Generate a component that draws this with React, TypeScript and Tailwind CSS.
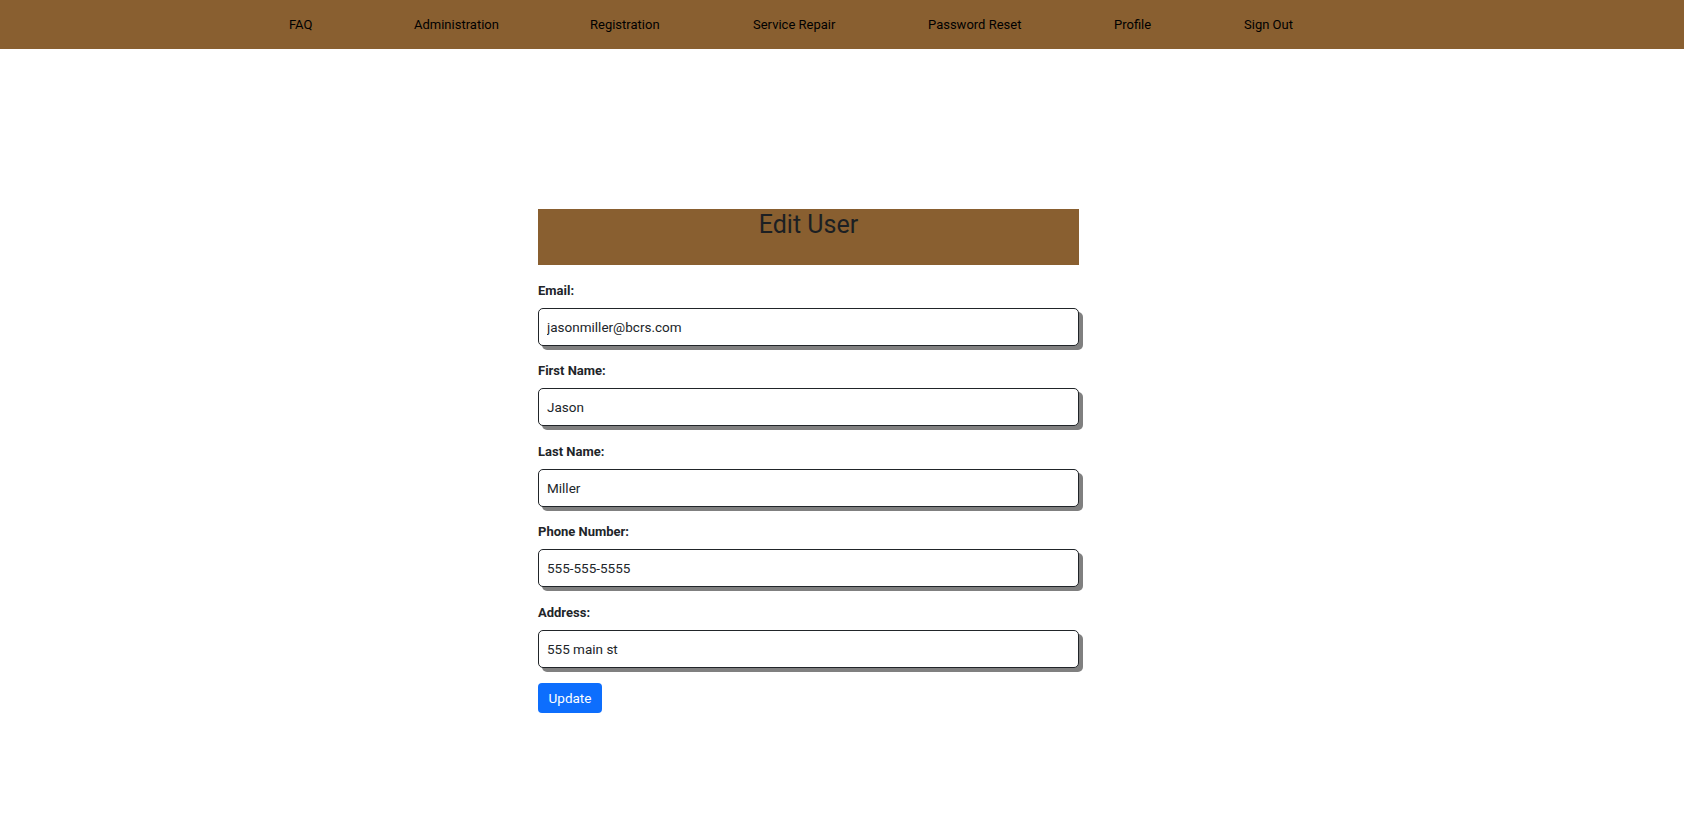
import { useState } from "react";

const navLinks = [
  { label: "FAQ", w: "w-[125px]" },
  { label: "Administration", w: "w-[176px]" },
  { label: "Registration", w: "w-[163px]" },
  { label: "Service Repair", w: "w-[175px]" },
  { label: "Password Reset", w: "w-[186px]" },
  { label: "Profile", w: "w-[130px]" },
  { label: "Sign Out", w: "w-auto" },
];

const initialFields = [
  { key: "email", label: "Email:", value: "jasonmiller@bcrs.com", gap: "mt-[15px]" },
  { key: "firstName", label: "First Name:", value: "Jason", gap: "mt-[14px]" },
  { key: "lastName", label: "Last Name:", value: "Miller", gap: "mt-[15px]" },
  { key: "phone", label: "Phone Number:", value: "555-555-5555", gap: "mt-[14px]" },
  { key: "address", label: "Address:", value: "555 main st", gap: "mt-[15px]" },
];

export default function App() {
  const [values, setValues] = useState<Record<string, string>>(
    Object.fromEntries(initialFields.map((f) => [f.key, f.value]))
  );

  return (
    <div className="min-h-screen bg-white font-['Roboto',sans-serif] text-[#212529]">
      {/* Top nav */}
      <nav className="h-[49px] bg-[#895f30] flex items-center pl-[289px] pb-[2px]">
        {navLinks.map((link) => (
          <div key={link.label} className={`${link.w} shrink-0`}>
            <a href="#" className="text-[13px] text-black">
              {link.label}
            </a>
          </div>
        ))}
      </nav>

      {/* Edit user form */}
      <div className="pl-[538px] pt-[160px]">
        <div className="w-[541px]">
          <div className="h-[56px] bg-[#895f30]">
            <h2 className="text-center text-[25px] leading-[1.2] pt-[1px] text-[#1c1f23]">
              Edit User
            </h2>
          </div>

          <form onSubmit={(e) => e.preventDefault()}>
            {initialFields.map((field) => (
              <div key={field.key} className={field.gap}>
                <label className="block h-[20px] leading-[22px] mb-[8px] text-[13px] font-bold">
                  {field.label}
                </label>
                <input
                  type="text"
                  value={values[field.key]}
                  onChange={(e) => setValues({ ...values, [field.key]: e.target.value })}
                  className="block w-full h-[38px] px-[8px] text-[13.5px] text-[#212529] bg-white border border-[#212529] rounded-[5px] shadow-[4px_4px_0_#808080] outline-none"
                />
              </div>
            ))}

            <button
              type="submit"
              className="mt-[15px] h-[30px] w-[64px] rounded-[4px] bg-[#0d6efd] text-white text-[13.5px]"
            >
              Update
            </button>
          </form>
        </div>
      </div>
    </div>
  );
}
